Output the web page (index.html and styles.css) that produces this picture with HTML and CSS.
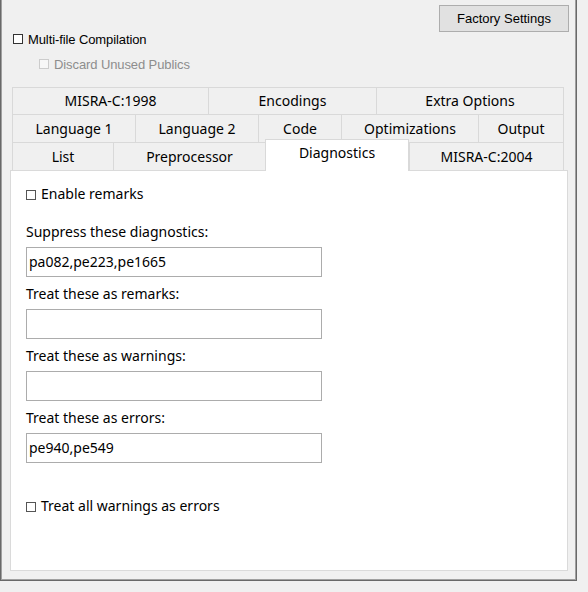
FILE: index.html
```html
<!DOCTYPE html>
<html>
<head>
<meta charset="utf-8">
<link rel="stylesheet" href="styles.css">
</head>
<body>
<div class="frame">
  <div class="top-bar">
    <button class="btn">Factory Settings</button>
  </div>
  <label class="cb-small first"><span class="box"></span>Multi-file Compilation</label>
  <label class="cb-small second disabled"><span class="box"></span>Discard Unused Publics</label>

  <div class="tabs">
    <div class="row row1">
      <div class="tab">MISRA-C:1998</div>
      <div class="tab">Encodings</div>
      <div class="tab last">Extra Options</div>
    </div>
    <div class="row row2">
      <div class="tab">Language 1</div>
      <div class="tab">Language 2</div>
      <div class="tab">Code</div>
      <div class="tab">Optimizations</div>
      <div class="tab last">Output</div>
    </div>
    <div class="row row3">
      <div class="tab">List</div>
      <div class="tab">Preprocessor</div>
      <div class="tab active">Diagnostics</div>
      <div class="tab last">MISRA-C:2004</div>
    </div>
  </div>

  <div class="panel">
    <label class="cb enable"><span class="box"></span>Enable remarks</label>
    <div class="field">
      <div class="lbl">Suppress these diagnostics:</div>
      <div class="input">pa082,pe223,pe1665</div>
    </div>
    <div class="field">
      <div class="lbl">Treat these as remarks:</div>
      <div class="input"></div>
    </div>
    <div class="field">
      <div class="lbl">Treat these as warnings:</div>
      <div class="input"></div>
    </div>
    <div class="field">
      <div class="lbl">Treat these as errors:</div>
      <div class="input">pe940,pe549</div>
    </div>
    <label class="cb all-warn"><span class="box"></span>Treat all warnings as errors</label>
  </div>
</div>
</body>
</html>
```

FILE: styles.css
```css
* { box-sizing: border-box; }

html, body {
  margin: 0;
  padding: 0;
  background: #f0f0f0;
  width: 588px;
  height: 592px;
  overflow: hidden;
}

.frame {
  width: 577px;
  height: 581px;
  border: 1px solid #696969;
  border-top: none;
  box-shadow: inset 1px 0 0 #a0a0a0, inset -1px -1px 0 #a0a0a0;
  padding: 0 1px;
  display: flex;
  flex-direction: column;
  font-family: "Noto Sans", sans-serif;
  font-size: 14px;
  color: #000;
}

.top-bar {
  display: flex;
  justify-content: flex-end;
  padding: 5px 6px 0 0;
}

.btn {
  width: 130px;
  height: 27px;
  background: #e1e1e1;
  border: 1px solid #adadad;
  font-family: "Liberation Sans", Arial, sans-serif;
  font-size: 13px;
  color: #000;
  padding: 0;
  margin: 0;
}

.cb-small {
  display: flex;
  align-items: center;
  height: 16px;
  font-family: "Liberation Sans", Arial, sans-serif;
  font-size: 13px;
  letter-spacing: -0.1px;
}

.cb-small .box {
  width: 10px;
  height: 10px;
  border: 1px solid #333;
  background: #fff;
  margin-right: 5px;
}

.cb-small.first {
  margin-top: -1px;
  padding-left: 11px;
}

.cb-small.second {
  margin-top: 9px;
  padding-left: 37px;
}

.disabled {
  color: #8d8d8d;
}

.cb-small.disabled .box {
  border-color: #cccccc;
  background: #f7f7f7;
}

.tabs {
  margin: 15px 0 0 10px;
  width: 552px;
  display: flex;
  flex-direction: column;
}

.row {
  display: grid;
  height: 28px;
}

.row1 { grid-template-columns: 196px 168px 188px; height: 27px; }
.row2 { grid-template-columns: 123px 123px 83px 137px 86px; }
.row3 { grid-template-columns: 101px 152px 144px 155px; }

.tab {
  border-top: 1px solid #d9d9d9;
  border-left: 1px solid #d9d9d9;
  background: #f0f0f0;
  display: flex;
  align-items: center;
  justify-content: center;
  white-space: nowrap;
  line-height: 20px;
}

.tab.last {
  border-right: 1px solid #d9d9d9;
}

.tab.active {
  position: relative;
  z-index: 1;
  background: #fff;
  border: 1px solid #d9d9d9;
  border-bottom: none;
  margin-top: -3px;
  height: 32px;
  align-items: flex-start;
  padding-top: 3px;
}

.panel {
  margin-left: 8px;
  width: 558px;
  height: 401px;
  background: #fff;
  border: 1px solid #dadada;
  padding: 13px 0 0 15px;
  display: flex;
  flex-direction: column;
  align-items: flex-start;
}

.cb {
  display: flex;
  align-items: center;
  height: 20px;
  line-height: 20px;
}

.cb .box {
  width: 10px;
  height: 10px;
  border: 1px solid #555;
  background: #fff;
  margin-right: 5px;
  margin-top: 1px;
}

.enable {
  margin-bottom: 18px;
}

.field {
  display: flex;
  flex-direction: column;
  margin-bottom: 7px;
}

.lbl {
  height: 20px;
  line-height: 20px;
  margin-bottom: 5px;
}

.input {
  width: 296px;
  height: 30px;
  border: 1px solid #acacac;
  background: #fff;
  padding-left: 2px;
  line-height: 28px;
  white-space: nowrap;
}

.all-warn {
  margin-top: 26px;
}
```
